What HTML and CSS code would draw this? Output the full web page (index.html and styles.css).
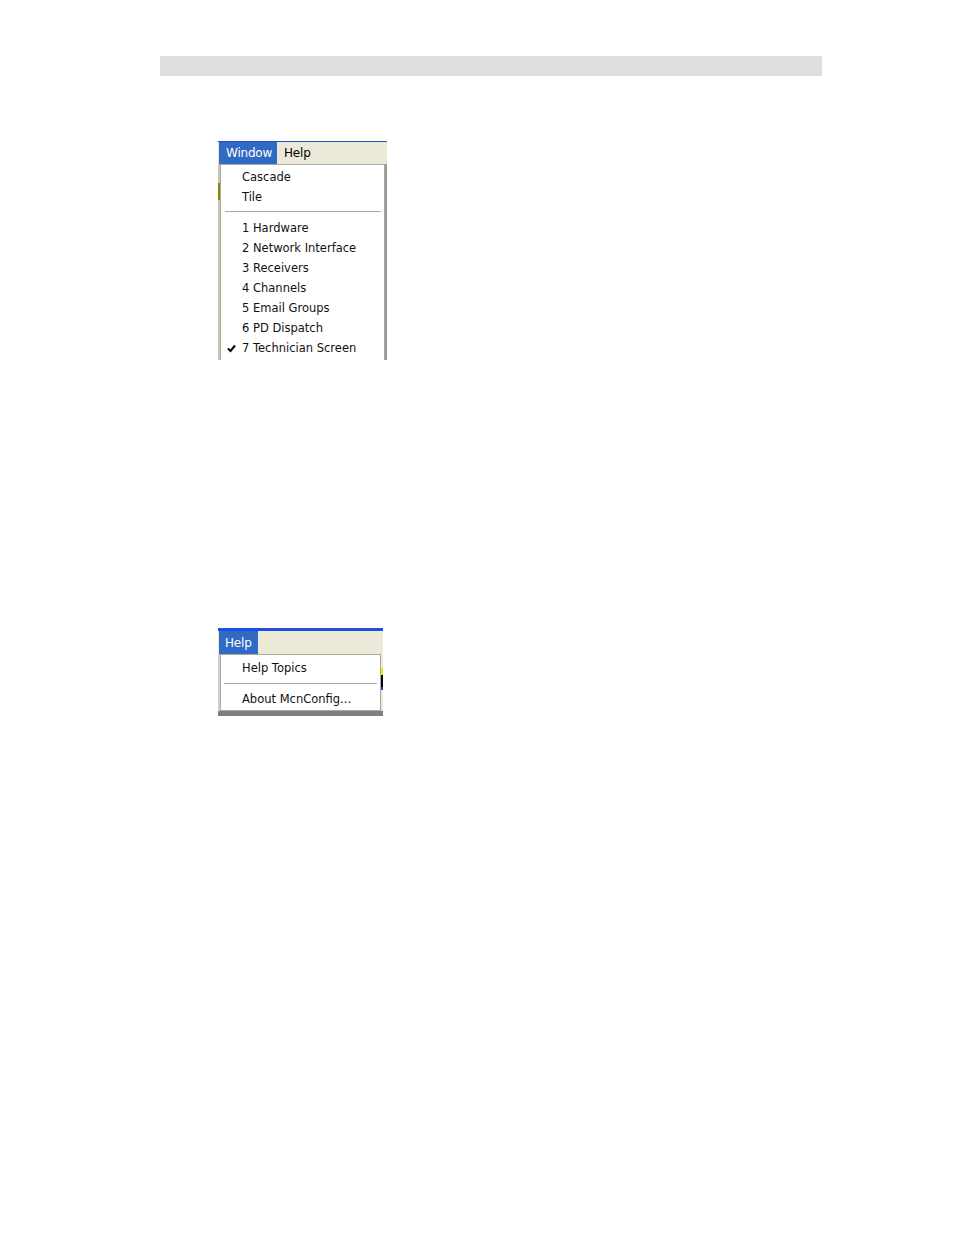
FILE: index.html
```html
<!DOCTYPE html>
<html>
<head>
<meta charset="utf-8">
<link rel="stylesheet" href="styles.css">
</head>
<body>
<div class="page">
  <div class="header-bar"></div>

  <div class="shot shot-window">
    <div class="topline"></div>
    <div class="menubar">
      <span class="mitem active mitem-window">Window</span>
      <span class="mitem mitem-plain">Help</span>
    </div>
    <div class="body">
      <div class="leftstrip"><div class="ystrip"></div></div>
      <div class="dropdown">
        <div class="row">Cascade</div>
        <div class="row">Tile</div>
        <div class="sep"></div>
        <div class="row">1 Hardware</div>
        <div class="row">2 Network Interface</div>
        <div class="row">3 Receivers</div>
        <div class="row">4 Channels</div>
        <div class="row">5 Email Groups</div>
        <div class="row">6 PD Dispatch</div>
        <div class="row checked"><svg class="check" width="9" height="9" viewBox="0 0 9 9"><path d="M1 4.5 L3.5 7 L8 1.5" fill="none" stroke="#000" stroke-width="2"/></svg>7 Technician Screen</div>
      </div>
      <div class="shadow"></div>
    </div>
  </div>

  <div class="shot shot-help">
    <div class="topline thick"></div>
    <div class="menubar tall">
      <span class="mitem active mitem-help">Help</span>
    </div>
    <div class="body">
      <div class="leftstrip gray"></div>
      <div class="dropdown short">
        <div class="row">Help Topics</div>
        <div class="sep sep2"></div>
        <div class="row">About McnConfig...</div>
      </div>
      <div class="rightstrip"><div class="rs-gray"></div><div class="rs-y"></div><div class="rs-k"></div><div class="rs-b"></div></div>
    </div>
    <div class="bottomband"></div>
  </div>
</div>
</body>
</html>
```

FILE: styles.css
```css
html, body { margin: 0; padding: 0; background: #fff; }
.page { padding-top: 56px; font-family: "DejaVu Sans", Tahoma, sans-serif; font-size: 11px; color: #000; }
.header-bar { margin-left: 160px; width: 662px; height: 20px; background: #dedede; }

.shot { margin-left: 218px; }
.shot-window { margin-top: 65px; width: 169px; }
.shot-help { margin-top: 268px; width: 165px; }

.topline { height: 1px; background: #1f4fcf; }
.topline.thick { height: 3px; background: #1c50e0; }

.menubar { height: 22px; background: #ece9d8; display: flex; align-items: stretch; padding-left: 1px; }
.menubar.tall { height: 23px; }
.mitem { display: flex; align-items: center; padding: 0 6px; font-size: 12px; letter-spacing: -0.2px; }
.mitem.active { background: #316ac5; color: #fff; }
.mitem-window { width: 58px; box-sizing: border-box; padding-left: 7px; }
.mitem-plain { padding-left: 7px; }
.mitem-help { width: 39px; box-sizing: border-box; padding-left: 6px; }

.body { display: flex; }
.leftstrip { width: 2px; background: #c8c4b8; display: flex; flex-direction: column; padding-top: 19px; }
.leftstrip.gray { background: #d4d0c8; }
.ystrip { height: 17px; background: #8a8400; }

.dropdown { width: 165px; box-sizing: border-box; border: 1px solid #aca899; border-bottom: none; background: #fff; height: 196px; padding-top: 2px; }
.dropdown.short { width: 161px; height: 57px; border-bottom: 1px solid #aca899; padding-top: 3px; }
.shadow { width: 2px; background: #9c9a94; }

.row { height: 20px; line-height: 20px; padding-left: 21px; position: relative; white-space: nowrap; font-family: "DejaVu Sans", sans-serif; font-size: 11.5px; letter-spacing: 0; color: #111; }
.check { position: absolute; left: 6px; top: 6px; }

.sep { height: 1px; background: #aca899; border-bottom: 1px solid #fff; margin: 4px 3px 5px 4px; }
.sep2 { margin: 5px 3px 4px 3px; }

.rightstrip { width: 2px; display: flex; flex-direction: column; background: #ece9d8; }
.rs-gray { height: 14px; background: #ece9d8; }
.rs-y { height: 7px; background: #e8e800; }
.rs-k { height: 12px; background: #000; }
.rs-b { height: 3px; background: #2040c0; }

.bottomband { height: 5px; background: #7f7f7f; }
```
